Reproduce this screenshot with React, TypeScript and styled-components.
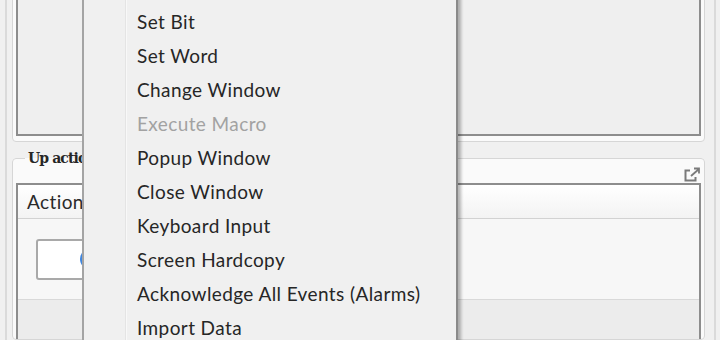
import styled, { createGlobalStyle } from "styled-components";

const GlobalStyle = createGlobalStyle`
  html, body {
    margin: 0;
    padding: 0;
    background: #f0f0f0;
    overflow: hidden;
  }
  body {
    font-family: Lato, "Noto Sans", sans-serif;
  }
`;

const menuItems = [
  { label: "Set Bit", disabled: false },
  { label: "Set Word", disabled: false },
  { label: "Change Window", disabled: false },
  { label: "Execute Macro", disabled: true },
  { label: "Popup Window", disabled: false },
  { label: "Close Window", disabled: false },
  { label: "Keyboard Input", disabled: false },
  { label: "Screen Hardcopy", disabled: false },
  { label: "Acknowledge All Events (Alarms)", disabled: false },
  { label: "Import Data", disabled: false },
];

const PopOutIcon = () => (
  <svg width="18" height="16" viewBox="0 0 18 16" fill="none">
    <path d="M7 3.5H2.5v10h10V10" stroke="#7a7a7a" strokeWidth="2" />
    <path d="M8 9l8-7M11 1.5h5v5" stroke="#7a7a7a" strokeWidth="1.8" />
  </svg>
);

const App = () => {
  return (
    <Screen>
      <GlobalStyle />
      <Frame>
        <GroupBox>
          <Preview />
        </GroupBox>
        <ActionGroup>
          <Legend>Up action</Legend>
          <GroupHeader>
            <PopOutIcon />
          </GroupHeader>
          <ListBox>
            <ListHeader>Action</ListHeader>
            <ListRow>
              <TextBox>
                <Dot />
              </TextBox>
            </ListRow>
            <ListRest />
          </ListBox>
        </ActionGroup>
      </Frame>
      <Menu>
        {menuItems.map((item) => (
          <MenuItem key={item.label} disabled={item.disabled}>
            {item.label}
          </MenuItem>
        ))}
      </Menu>
    </Screen>
  );
};

export default App;

const Screen = styled.div`
  position: relative;
  width: 720px;
  height: 340px;
  overflow: hidden;
  background: #f0f0f0;
`;

const Frame = styled.div`
  box-sizing: border-box;
  margin-left: 5px;
  width: 711px;
  height: 100%;
  border-left: 2px solid #dadada;
  border-right: 2px solid #dadada;
  padding: 0 9px 0 5px;
  display: flex;
  flex-direction: column;
`;

const GroupBox = styled.div`
  margin-top: -20px;
  border: 1px solid #d6d6d6;
  border-radius: 4px;
  background: #fafafa;
  padding: 3px 3px 5px 3px;
`;

const Preview = styled.div`
  box-sizing: border-box;
  height: 152px;
  border: 2px solid #8d8d8d;
  background: #efefef;
`;

const ActionGroup = styled.fieldset`
  margin: 7px 0 0 0;
  padding: 0 3px;
  border: 1px solid #d6d6d6;
  border-radius: 4px;
  background: #fafafa;
  flex: 1;
  min-width: 0;
  display: flex;
  flex-direction: column;
`;

const Legend = styled.legend`
  margin-left: 9px;
  padding: 0 3px;
  font-family: "DejaVu Serif", "Liberation Serif", serif;
  font-size: 14px;
  font-weight: 700;
  line-height: 18px;
  letter-spacing: -0.9px;
  color: #262626;
`;

const GroupHeader = styled.div`
  height: 16px;
  display: flex;
  justify-content: flex-end;
  align-items: flex-end;
`;

const ListBox = styled.div`
  flex: 1;
  border: 2px solid #8d8d8d;
  border-bottom: none;
  display: flex;
  flex-direction: column;
`;

const ListHeader = styled.div`
  height: 33px;
  display: flex;
  align-items: center;
  padding-left: 9px;
  font-size: 19px;
  letter-spacing: 0.4px;
  color: #2a2a2a;
  background: linear-gradient(#ffffff, #f3f3f3);
  border-bottom: 1px solid #d2d2d2;
`;

const ListRow = styled.div`
  height: 80px;
  display: flex;
  align-items: center;
  padding-left: 18px;
  background: #f7f7f7;
  border-bottom: 1px solid #d9d9d9;
`;

const TextBox = styled.div`
  position: relative;
  box-sizing: border-box;
  width: 170px;
  height: 41px;
  border: 2px solid #a9a9a9;
  border-radius: 3px;
  background: #ffffff;
`;

const Dot = styled.span`
  position: absolute;
  left: 42px;
  top: 7px;
  width: 22px;
  height: 22px;
  border-radius: 50%;
  background: #3f86df;
`;

const ListRest = styled.div`
  flex: 1;
  background: #ececec;
`;

const Menu = styled.div`
  position: absolute;
  left: 82px;
  top: -40px;
  box-sizing: border-box;
  width: 376px;
  height: 420px;
  padding-top: 44px;
  background: #f0f0f0;
  border-left: 2px solid #a4a4a4;
  border-right: 2px solid #8a8a8a;
  box-shadow: 3px 0 3px rgba(0, 0, 0, 0.28);

  &::before {
    content: "";
    position: absolute;
    top: 0;
    bottom: 0;
    left: 41px;
    width: 1px;
    background: #e4e4e4;
    box-shadow: 1px 0 0 #f8f8f8;
  }
`;

const MenuItem = styled.div<{ disabled: boolean }>`
  height: 34px;
  display: flex;
  align-items: center;
  padding-left: 53px;
  font-size: 19px;
  letter-spacing: 0.4px;
  color: ${(p) => (p.disabled ? "#a2a2a2" : "#262626")};
  white-space: nowrap;
`;
